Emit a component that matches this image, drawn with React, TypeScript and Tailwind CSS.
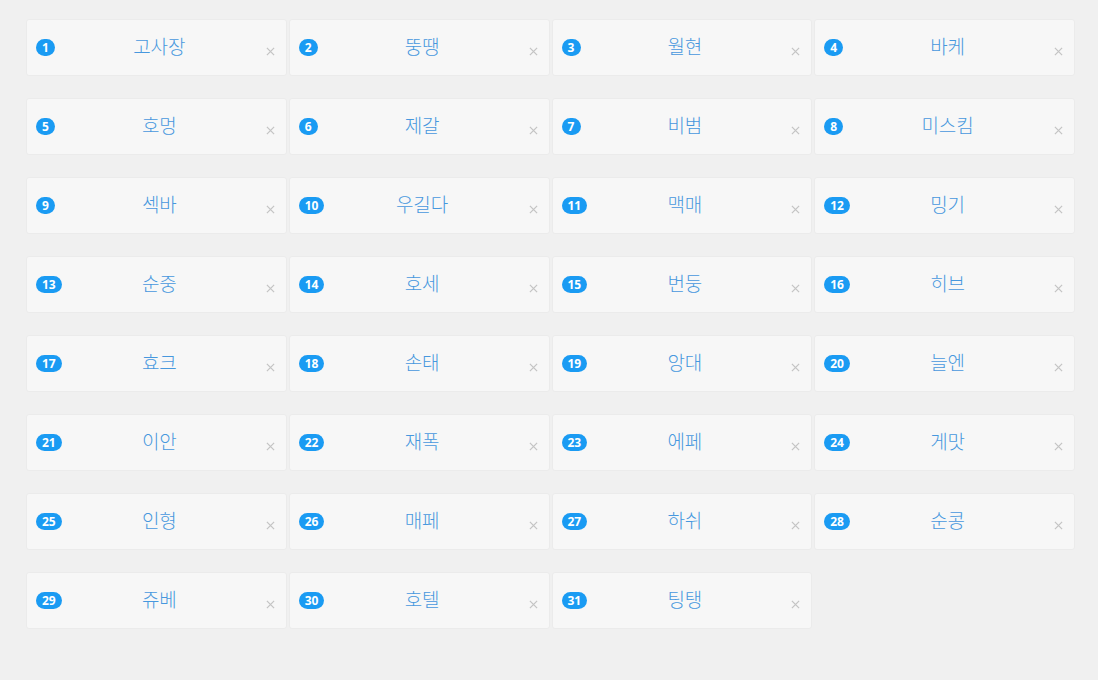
import React from 'react';

const NAMES = [
  '고사장', '뚱땡', '월현', '바케',
  '호멍', '제갈', '비범', '미스킴',
  '섹바', '우길다', '맥매', '밍기',
  '순중', '호세', '번둥', '히브',
  '효크', '손태', '앙대', '늘엔',
  '이안', '재폭', '에페', '게맛',
  '인형', '매페', '하쉬', '순콩',
  '쥬베', '호텔', '팅탱',
];

const App: React.FC = () => {
  return (
    <div
      className="min-h-[680px] w-full bg-[#f0f0f0] pt-[19px] pl-[26px]"
      style={{ fontFamily: '"Open Sans", "Noto Sans CJK KR", sans-serif' }}
    >
      <div className="grid w-[1049px] grid-cols-4 gap-x-[2px] gap-y-[22px]">
        {NAMES.map((name, i) => (
          <div
            key={name}
            className="relative flex h-[57px] items-center justify-center rounded-[3px] border border-[#ebebeb] bg-[#f7f7f7] pl-[6px]"
          >
            <span className="absolute left-[9px] top-[19px] flex h-[17px] min-w-[19px] items-center justify-center rounded-full bg-[#1a9bf3] px-[6px] text-[12px] font-bold leading-none text-white">
              {i + 1}
            </span>
            <span className="text-[19px] font-light text-[#4798de]">{name}</span>
            <svg
              className="absolute right-[11px] top-[27px] h-[9px] w-[9px] text-[#c4c4c4]"
              viewBox="0 0 10 10"
              fill="none"
              stroke="currentColor"
              strokeWidth="1.4"
            >
              <path d="M1 1l8 8M9 1l-8 8" />
            </svg>
          </div>
        ))}
      </div>
    </div>
  );
};

export default App;
